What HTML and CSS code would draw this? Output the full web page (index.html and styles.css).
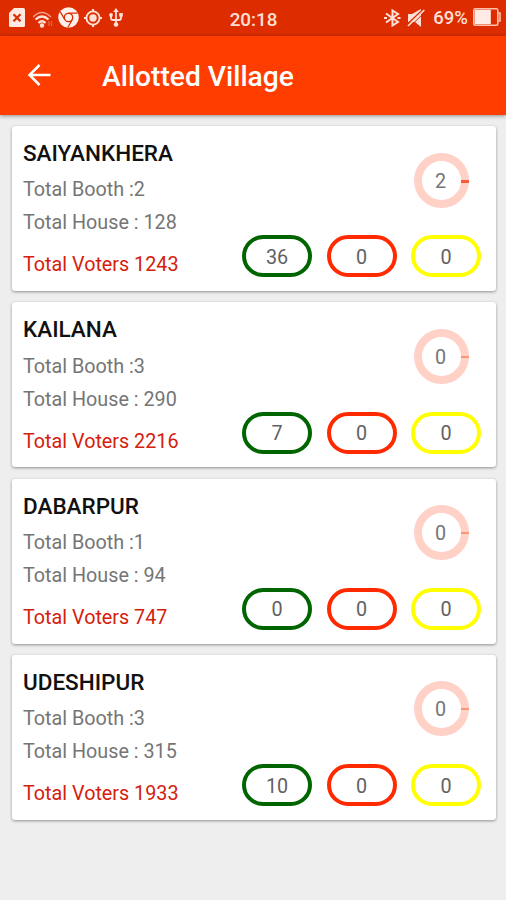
FILE: index.html
```html
<!DOCTYPE html>
<html lang="en">
  <head>
    <meta charset="UTF-8" />
    <title>Allotted Village</title>
    <link rel="stylesheet" href="styles.css">
  </head>
  <body>
    <!-- status bar -->
    <div class="status">
      <div class="status_left">
        <svg width="16" height="19" viewBox="0 0 16 19">
          <path d="M5 0H14.500Q16 0 16 1.500V17.500Q16 19 14.500 19H1.500Q0 19 0 17.500V5Z" fill="#ffe9e2" />
          <path d="M4.500 6.200L11.500 13.300M11.500 6.200L4.500 13.300" stroke="#d92c00" stroke-width="2.200" />
        </svg>
        <svg class="wifi" width="20" height="17" viewBox="0 0 20 17" fill="none" stroke="#ffe0d6">
          <path d="M0 6Q9 -3 18 6" stroke-width="1.300" opacity=".65" />
          <path d="M2.500 8.500Q9 2.500 15.500 8.500" stroke-width="2.300" />
          <path d="M5.500 12Q9 8.500 12.500 12" stroke-width="2.300" />
          <circle cx="9" cy="14.500" r="2.200" fill="#ffe0d6" stroke="none" />
          <path d="M16 10V15M18.500 10V15" stroke-width="1.200" opacity=".35" />
        </svg>
        <svg class="chrome" width="21" height="21" viewBox="0 0 21 21">
          <circle cx="10.500" cy="10.500" r="10.300" fill="#fff0eb" />
          <circle cx="10.500" cy="10.500" r="4.200" fill="none" stroke="#d92c00" stroke-width="1.300" />
          <path d="M10.500 6.200H19.500M6.800 12.600L2.300 4.900M14.200 12.600L9.800 20.500" stroke="#d92c00" stroke-width="1.200" />
        </svg>
        <svg class="gps" width="18" height="18" viewBox="0 0 18 18">
          <circle cx="9" cy="9" r="6.600" fill="none" stroke="#ffe0d6" stroke-width="1.900" />
          <circle cx="9" cy="9" r="3.700" fill="#ffe0d6" />
          <path d="M9 0V3M9 15V18M0 9H3M15 9H18" stroke="#ffe0d6" stroke-width="2.200" />
        </svg>
        <svg class="usb" width="14" height="19" viewBox="0 0 14 19" fill="none" stroke="#ffe0d6" stroke-width="1.800">
          <path d="M7 3V16M2 7V10Q2 12 4 12H10Q12 12 12 10V7" />
          <path d="M7 0L9.800 4H4.200Z" fill="#ffe0d6" stroke="none" />
          <circle cx="2" cy="7" r="1.900" fill="#ffe0d6" stroke="none" />
          <rect x="10.200" y="5" width="3.600" height="3.600" fill="#ffe0d6" stroke="none" />
          <circle cx="7" cy="16.500" r="2.300" fill="#ffe0d6" stroke="none" />
        </svg>
      </div>
      <span class="time">20:18</span>
      <div class="status_right">
        <svg width="17" height="18" viewBox="0 0 17 18" fill="none" stroke="#ffe0d6" stroke-width="2">
          <path d="M2 4.500L14 13L8.500 16.500V1.500L14 5L2 13.500" />
          <path d="M0 9H3M13.500 9H16.500" stroke-width="2.200" />
        </svg>
        <svg class="mute" width="18" height="18" viewBox="0 0 18 18">
          <path d="M1 5H5L14 0V18L8 13H1Z" fill="#ffe0d6" />
          <path d="M0 15.500L16 .500" stroke="#d92c00" stroke-width="1.500" />
          <path d="M1 17L17.300 1" stroke="#ffe0d6" stroke-width="1.700" />
          <path d="M2.500 18L18 3" stroke="#d92c00" stroke-width="1" />
        </svg>
        <span class="percent">69%</span>
        <svg class="battery" width="28" height="18" viewBox="0 0 28 18">
          <rect x=".8" y=".8" width="24" height="16.400" rx="1.500" fill="none" stroke="#ffc0ac" stroke-width="1.600" />
          <rect x="1.800" y="1.800" width="16" height="14.400" fill="#ffebe5" />
          <path d="M25 5H27V13H25" fill="none" stroke="#ffc0ac" stroke-width="1.600" />
        </svg>
      </div>
    </div>

    <!-- app bar -->
    <header class="appbar">
      <svg width="24" height="22" viewBox="0 0 24 22" fill="none" stroke="#fff" stroke-width="2.500">
        <path d="M12.500 1L2.500 11L12.500 21M2.500 11H23.500" />
      </svg>
      <h1>Allotted Village</h1>
    </header>

    <!-- village list -->
    <main class="list">
      <article class="card">
        <div class="info">
          <h2>SAIYANKHERA</h2>
          <p>Total Booth :2</p>
          <p>Total House : 128</p>
          <p class="voters">Total Voters 1243</p>
        </div>
        <div class="stats">
          <div class="ring"><span>2</span></div>
          <ul class="pills">
            <li class="green">36</li>
            <li class="red">0</li>
            <li class="yellow">0</li>
          </ul>
        </div>
      </article>
      <article class="card">
        <div class="info">
          <h2>KAILANA</h2>
          <p>Total Booth :3</p>
          <p>Total House : 290</p>
          <p class="voters">Total Voters 2216</p>
        </div>
        <div class="stats">
          <div class="ring empty"><span>0</span></div>
          <ul class="pills">
            <li class="green">7</li>
            <li class="red">0</li>
            <li class="yellow">0</li>
          </ul>
        </div>
      </article>
      <article class="card">
        <div class="info">
          <h2>DABARPUR</h2>
          <p>Total Booth :1</p>
          <p>Total House : 94</p>
          <p class="voters">Total Voters 747</p>
        </div>
        <div class="stats">
          <div class="ring empty"><span>0</span></div>
          <ul class="pills">
            <li class="green">0</li>
            <li class="red">0</li>
            <li class="yellow">0</li>
          </ul>
        </div>
      </article>
      <article class="card">
        <div class="info">
          <h2>UDESHIPUR</h2>
          <p>Total Booth :3</p>
          <p>Total House : 315</p>
          <p class="voters">Total Voters 1933</p>
        </div>
        <div class="stats">
          <div class="ring empty"><span>0</span></div>
          <ul class="pills">
            <li class="green">10</li>
            <li class="red">0</li>
            <li class="yellow">0</li>
          </ul>
        </div>
      </article>
    </main>
  </body>
</html>
```

FILE: styles.css
```css
* {
  box-sizing: border-box;
  margin: 0;
  padding: 0;
  list-style: none;
}
body {
  min-height: 900px;
  background-color: #eee;
  font-family: Roboto, sans-serif;
  font-size: 19.75px;
  color: #757575;
}
svg {
  display: block;
  flex: none;
}
.status {
  display: grid;
  grid-template-columns: 1fr auto 1fr;
  align-items: center;
  height: 36px;
  padding: 0 5px 0 9px;
  background-color: #dc2c00;
  color: #ffe0d6;
}
.status_left,
.status_right {
  display: flex;
  align-items: center;
}
.status_left {
  margin-top: -1px;
}
.status_right {
  justify-content: flex-end;
  margin-top: -1px;
}
.wifi {
  margin: 4px 0 0 8px;
}
.chrome {
  margin-left: 5px;
}
.gps {
  margin-left: 5px;
}
.usb {
  margin-left: 7px;
}
.time {
  margin-left: -3px;
  padding-top: 3px;
  font-size: 18.8px;
  font-weight: 500;
  line-height: 22px;
}
.mute {
  margin-left: 6px;
}
.percent {
  margin-left: 8px;
  font-size: 18.5px;
  font-weight: 500;
}
.battery {
  margin: -1px 0 0 5px;
}
.appbar {
  display: flex;
  align-items: center;
  height: 78.5px;
  padding-left: 27px;
  background-color: #ff3d00;
  box-shadow: 0 1px 4px rgba(0, 0, 0, 0.4);
  color: #fff;
}
.appbar h1 {
  margin-left: 51px;
  padding-top: 3px;
  font-size: 28.2px;
  font-weight: 500;
}
.list {
  display: flex;
  flex-direction: column;
  gap: 11.3px;
  padding: 11.5px 10.5px 0 11.5px;
}
.card {
  display: flex;
  justify-content: space-between;
  height: 165px;
  padding: 0 14.5px 0 11.5px;
  background-color: #fff;
  border-radius: 3px;
  box-shadow: 0 1px 3px rgba(0, 0, 0, 0.4);
}
.info {
  padding-top: 13px;
}
.info h2 {
  margin-bottom: 6.4px;
  font-size: 22.5px;
  line-height: 28px;
  font-weight: 500;
  color: #111;
}
.info p {
  line-height: 33px;
}
.info .voters {
  margin-top: 9px;
  color: #d5200c;
}
.stats {
  display: flex;
  flex-direction: column;
  align-items: flex-end;
  justify-content: space-between;
  padding: 26.5px 0 13.7px;
}
.ring {
  display: flex;
  align-items: center;
  justify-content: center;
  position: relative;
  width: 55px;
  height: 55px;
  margin-right: 12px;
  padding: 2px 2px 0 0;
  border: 8px solid #ffd1c7;
  border-radius: 50%;
}
/* progress mark at 3 o'clock */
.ring::after {
  content: '';
  position: absolute;
  top: 19px;
  right: -8px;
  width: 8px;
  height: 3px;
  background-color: #ff5a36;
}
.ring.empty::after {
  height: 2px;
  background-color: #ff9279;
}
.pills {
  display: flex;
  gap: 14.5px;
}
.pills li {
  display: flex;
  align-items: center;
  justify-content: center;
  width: 70px;
  height: 42px;
  padding-top: 3px;
  border: 4px solid;
  border-radius: 21px;
  line-height: 24px;
  color: #616161;
}
.pills .green {
  border-color: #006400;
}
.pills .red {
  border-color: #ff2a00;
}
.pills .yellow {
  border-color: #ff0;
}
```
